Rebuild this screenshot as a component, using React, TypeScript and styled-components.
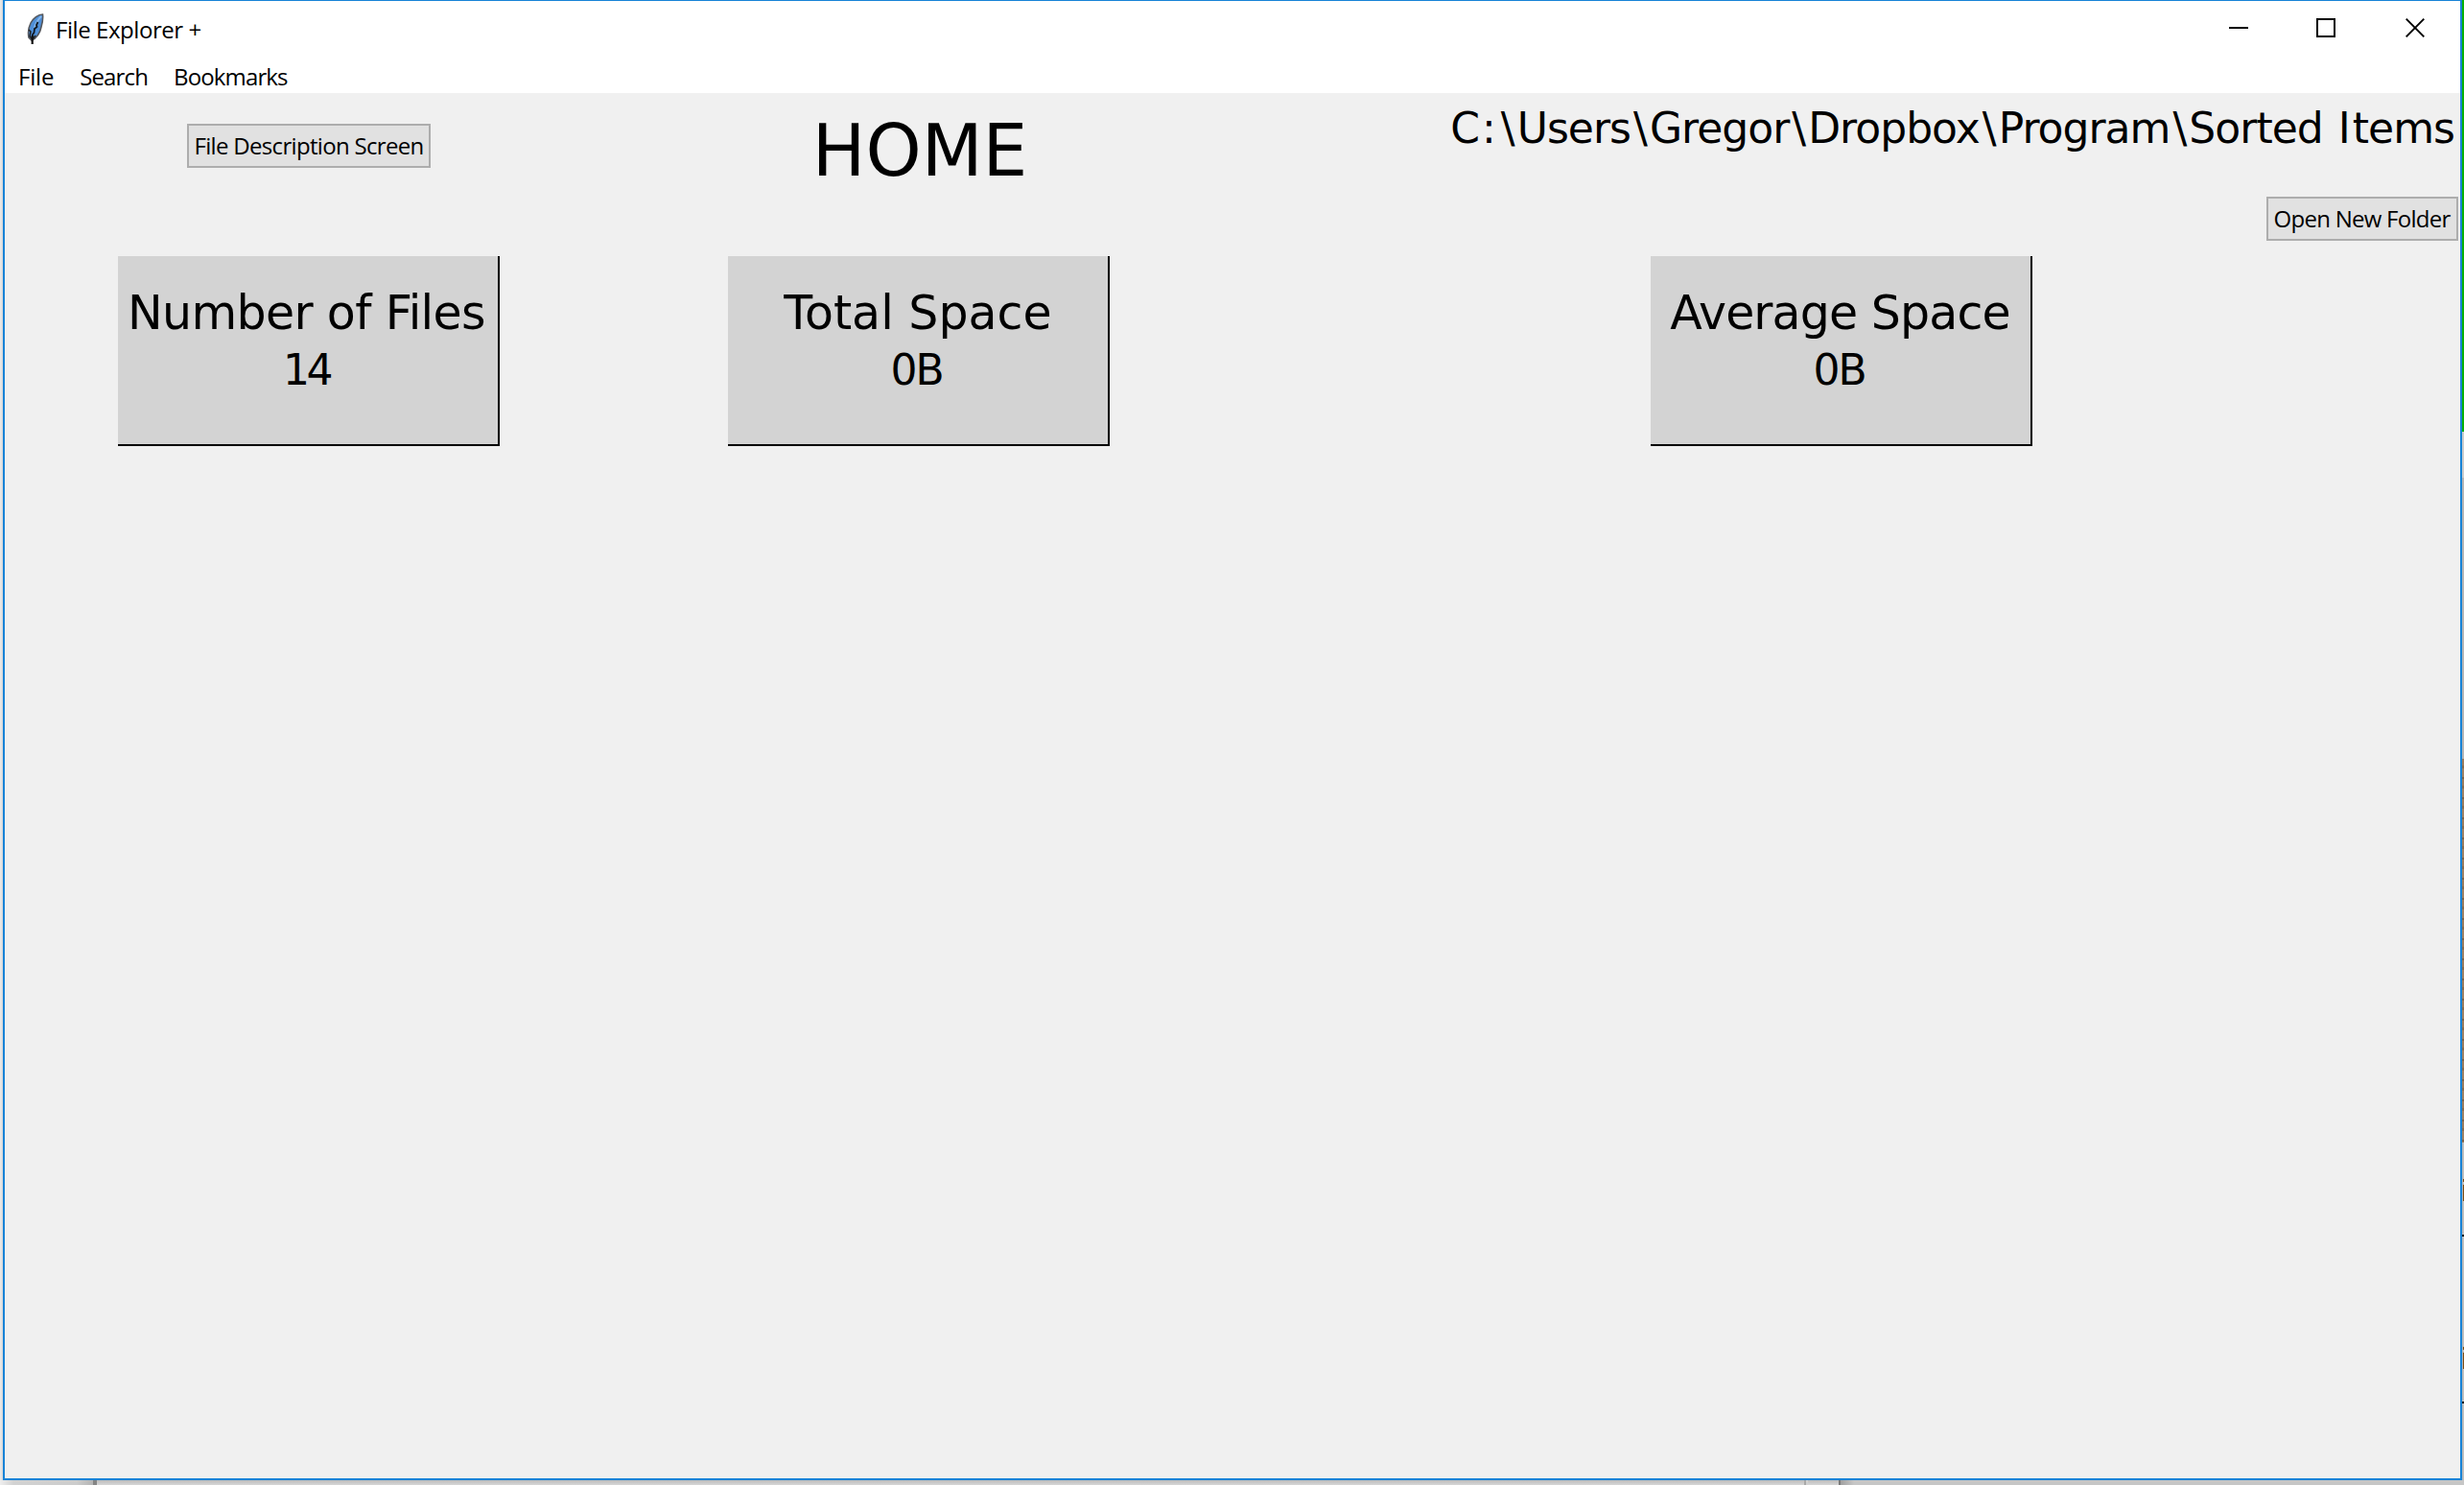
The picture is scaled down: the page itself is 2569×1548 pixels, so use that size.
import React from 'react';
import styled, { createGlobalStyle } from 'styled-components';

const GlobalStyle = createGlobalStyle`
  *, *::before, *::after { box-sizing: border-box; }
  html, body { margin: 0; padding: 0; overflow: hidden; }
`;

const Desktop = styled.div`
  display: grid;
  grid-template-columns: 3px 2564px 2px;
  grid-template-rows: 1543px 5px;
  width: 2569px;
  height: 1548px;
  background: #d0d0d0;
  color: #000;
`;

const LeftStrip = styled.div`
  background: linear-gradient(90deg, #ececec, #d6d6d6);
`;

const RightStrip = styled.div`
  display: flex;
  flex-direction: column;
`;

const BottomStrip = styled.div`
  grid-column: 1 / -1;
  display: flex;
`;

const Segment = styled.div<{ $size: number; $fill: string }>`
  flex: 0 0 ${(p) => p.$size}px;
  background: ${(p) => p.$fill};
`;

const Window = styled.main`
  display: flex;
  flex-direction: column;
  border: 2px solid #1883d7;
  border-top-width: 1px;
  background: #f0f0f0;
`;

const TitleBar = styled.header`
  display: flex;
  height: 57px;
  padding-left: 23px;
  background: #fff;
`;

const FeatherIcon = styled.svg`
  width: 18px;
  height: 33px;
  margin-top: 13px;
`;

const UiText = styled.span<{ $tracking: number }>`
  font-family: "Open Sans", "Noto Sans", sans-serif;
  font-size: 24px;
  line-height: 32px;
  letter-spacing: ${(p) => p.$tracking}px;
  white-space: nowrap;
`;

const WindowTitle = styled.div`
  flex: 1;
  padding: 14px 0 0 12px;
`;

const WindowControls = styled.div`
  display: flex;
  gap: 71px;
  padding: 18px 37px 0 0;
`;

const ControlIcon = styled.svg`
  width: 20px;
  height: 20px;
  fill: none;
  stroke: #000;

  &:last-child { margin-left: 2px; }
`;

const MenuBar = styled.nav`
  display: flex;
  gap: 27px;
  height: 39px;
  padding: 6px 0 0 14px;
  background: #fff;
`;

const Content = styled.section`
  display: grid;
  flex: 1;
  grid-template-columns: 634px 638px 1286px;
  grid-template-rows: 170px 1fr;
  justify-items: center;
  align-items: start;
`;

const PushButton = styled.button<{ $width: number; $top: number }>`
  width: ${(p) => p.$width}px;
  height: 46px;
  margin: ${(p) => p.$top}px 0 0;
  padding: 5px 0 0 5.5px;
  display: flex;
  align-items: flex-start;
  border: 2px solid #adadad;
  border-radius: 0;
  background: #e1e1e1;
  color: #000;
`;

const Heading = styled.h1`
  margin: 17px 0 0;
  padding-left: 2px;
  font: 400 74px/86px "DejaVu Sans", Verdana, sans-serif;
`;

const FolderCell = styled.div`
  justify-self: end;
  display: flex;
  flex-direction: column;
  align-items: flex-end;
  padding-top: 11px;
`;

const FolderPath = styled.div`
  padding-right: 4px;
  font: 44px/52px "DejaVu Sans", Verdana, sans-serif;
  letter-spacing: -0.97px;
  white-space: nowrap;
`;

/* Wide-set cell for the narrow glyphs of the path. */
const WideGlyph = styled.span`
  padding: 0 3px;
`;

const Card = styled.article`
  width: 398px;
  height: 198px;
  padding-top: 31px;
  display: flex;
  flex-direction: column;
  align-items: center;
  border: solid #000;
  border-width: 0 2px 2px 0;
  background: #d3d3d3;
`;

const CardTitle = styled.h2<{ $tracking: number; $shift: number }>`
  margin: 0;
  padding-right: ${(p) => p.$shift}px;
  font: 400 49px/58px "DejaVu Sans", Verdana, sans-serif;
  letter-spacing: ${(p) => p.$tracking}px;
  white-space: nowrap;
`;

const CardValue = styled.div<{ $tracking: number }>`
  margin-top: 4px;
  padding-right: 3px;
  font: 44px/52px "DejaVu Sans", Verdana, sans-serif;
  letter-spacing: ${(p) => p.$tracking}px;
`;

const menus = [
  { label: 'File', tracking: -0.2 },
  { label: 'Search', tracking: -0.85 },
  { label: 'Bookmarks', tracking: -0.87 },
];

const stats = [
  { title: 'Number of Files', value: '14', tracking: -0.66, shift: 3, valueTracking: -3.5 },
  { title: 'Total Space', value: '0B', tracking: 0, shift: 0, valueTracking: -2 },
  { title: 'Average Space', value: '0B', tracking: -0.9, shift: 1, valueTracking: -2 },
];

const folder = 'C:\\Users\\Gregor\\Dropbox\\Program\\Sorted Items';

const wood = 'repeating-linear-gradient(180deg, #9b7b5c 0 7px, #8a6c4f 7px 10px, #a08163 10px 19px, #7f6349 19px 21px)';
const shade = 'linear-gradient(90deg, #b4b4b4, #c4c4c4)';

const rightSegments: [number, string][] = [
  [450, '#06b006'],
  [48, '#cbcbcb'],
  [293, '#b5b5b5'],
  [400, wood],
  [38, shade],
  [3, 'linear-gradient(90deg, #b4b4b4 50%, #7b4a10 50%)'],
  [3, shade],
  [17, 'linear-gradient(90deg, #b4b4b4 50%, #7b4a10 50%)'],
  [35, shade],
  [2, '#000'],
  [115, shade],
  [3, 'linear-gradient(90deg, #b4b4b4 50%, #7b4a10 50%)'],
  [3, shade],
  [17, 'linear-gradient(90deg, #b4b4b4 50%, #7b4a10 50%)'],
  [34, shade],
  [2, '#000'],
  [80, shade],
];

const fade = 'linear-gradient(180deg, #bcbcbc, #d6d6d6)';

const bottomSegments: [number, string][] = [
  [97, 'linear-gradient(90deg, #eeeeee, #d2d2d2 14px, #cccccc 80px, #b4b4b4)'],
  [4, '#858585'],
  [1780, fade],
  [2, '#a8a8a8'],
  [2, '#d0d0d0'],
  [32, fade],
  [2, '#7a7a7a'],
  [650, 'linear-gradient(90deg, #a0a0a0, #c6c6c6 14px)'],
];

export default function App() {
  return (
    <>
      <GlobalStyle />
      <Desktop>
        <LeftStrip />
        <Window>
          <TitleBar>
            <FeatherIcon viewBox="0 0 18 33">
              <path d="M16.5 1 C12 1 6.500 5 4 10 C1.500 15 1 20 2 25 L5 28 C10 26 14 20 15 14 C16.500 9 17 5 16.500 1Z" fill="#4f8fd8" stroke="#55585e" strokeWidth="1.600" />
              <path d="M15 3 C11 7 9 11 8 15" stroke="#85b6ea" strokeWidth="2" fill="none" />
              <path d="M11.500 9 L10 12 L10.500 14 L8 16 L7.500 20 L6 22 L5.500 27" stroke="#101820" strokeWidth="1.800" fill="none" />
              <path d="M2 17 L4 19 L3 24 L6 27 L9 23" stroke="#222" strokeWidth="1.500" fill="none" />
              <path d="M5.700 23 V32" stroke="#111" strokeWidth="2.200" fill="none" />
            </FeatherIcon>
            <WindowTitle>
              <UiText $tracking={-0.44}>File Explorer +</UiText>
            </WindowTitle>
            <WindowControls>
              <ControlIcon viewBox="0 0 20 20"><path d="M0 10H20" strokeWidth="2" /></ControlIcon>
              <ControlIcon viewBox="0 0 20 20"><rect x="1" y="1" width="18" height="18" strokeWidth="2" /></ControlIcon>
              <ControlIcon viewBox="0 0 20 20"><path d="M0.700 0.700L19.300 19.300M19.300 0.700L0.700 19.300" strokeWidth="1.900" /></ControlIcon>
            </WindowControls>
          </TitleBar>
          <MenuBar>
            {menus.map((m) => (
              <UiText key={m.label} $tracking={m.tracking}>{m.label}</UiText>
            ))}
          </MenuBar>
          <Content>
            <PushButton $width={254} $top={32}>
              <UiText $tracking={-0.68}>File Description Screen</UiText>
            </PushButton>
            <Heading>HOME</Heading>
            <FolderCell>
              <FolderPath>
                {folder.split(/([:\\I])/).map((part, i) =>
                  i % 2 ? <WideGlyph key={i}>{part}</WideGlyph> : part,
                )}
              </FolderPath>
              <PushButton $width={200} $top={45}>
                <UiText $tracking={-0.73}>Open New Folder</UiText>
              </PushButton>
            </FolderCell>
            {stats.map((s) => (
              <Card key={s.title}>
                <CardTitle $tracking={s.tracking} $shift={s.shift}>{s.title}</CardTitle>
                <CardValue $tracking={s.valueTracking}>{s.value}</CardValue>
              </Card>
            ))}
          </Content>
        </Window>
        <RightStrip>
          {rightSegments.map(([size, fill], i) => (
            <Segment key={i} $size={size} $fill={fill} />
          ))}
        </RightStrip>
        <BottomStrip>
          {bottomSegments.map(([size, fill], i) => (
            <Segment key={i} $size={size} $fill={fill} />
          ))}
        </BottomStrip>
      </Desktop>
    </>
  );
}
